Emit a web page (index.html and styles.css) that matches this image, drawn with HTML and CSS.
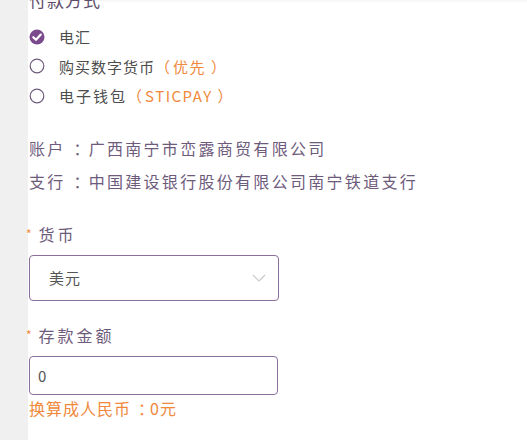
FILE: index.html
```html
<!DOCTYPE html>
<html lang="zh-CN">
<head>
    <meta charset="UTF-8">
    <title>入金</title>
    <link rel="stylesheet" href="styles.css">
</head>
<body>

<div class="page">
    <div class="side"></div>

    <div class="main">
        <h3 class="title">付款方式</h3>

        <!-- payment methods -->
        <ul class="methods">
            <li class="method">
                <svg class="radio" viewBox="0 0 16 16" width="16" height="16">
                    <circle cx="8" cy="8" r="7.5" fill="#7b4a8c"/>
                    <path d="M4.3 8.2 L7 10.8 L11.8 5.6" fill="none" stroke="#fff" stroke-width="2.2" stroke-linecap="round" stroke-linejoin="round"/>
                </svg>
                <span>电汇</span>
            </li>
            <li class="method">
                <svg class="radio" viewBox="0 0 16 16" width="16" height="16">
                    <circle cx="8" cy="8" r="6.8" fill="none" stroke="#6e5b7c" stroke-width="1.2"/>
                </svg>
                <span>购买数字货币<em class="note"><span class="lp">（</span>优先<span class="rp">）</span></em></span>
            </li>
            <li class="method">
                <svg class="radio" viewBox="0 0 16 16" width="16" height="16">
                    <circle cx="8" cy="8" r="6.8" fill="none" stroke="#6e5b7c" stroke-width="1.2"/>
                </svg>
                <span class="wide">电子钱包<em class="note"><span class="lp">（</span>STICPAY<span class="rp">）</span></em></span>
            </li>
        </ul>

        <div class="bank">
            <p>账户<span class="colon">：</span>广西南宁市峦露商贸有限公司</p>
            <p>支行<span class="colon">：</span>中国建设银行股份有限公司南宁铁道支行</p>
        </div>

        <div class="field">
            <label class="label"><i>*</i>货币</label>
            <div class="select">
                <span>美元</span>
                <svg class="chevron" viewBox="0 0 14 8" width="14" height="8">
                    <path d="M1 1 L7 7 L13 1" fill="none" stroke="#c9c9c9" stroke-width="1.2"/>
                </svg>
            </div>
        </div>

        <div class="field second">
            <label class="label"><i>*</i>存款金额</label>
            <input class="amount" type="text" value="0">
            <p class="convert">换算成人民币<span class="colon">：</span>0元</p>
        </div>
    </div>
</div>

</body>
</html>
```

FILE: styles.css
```css
body {
    margin: 0;
    background-color: #f0f0f0;
    font-family: "Noto Sans CJK SC", sans-serif;
    overflow: hidden;
}
.page {
    display: flex;
    min-height: 440px;
}
.side {
    width: 28px;
    flex-shrink: 0;
    background-color: #f0f0f0;
}
.main {
    flex: 1;
    background-color: #fff;
    padding: 0 0 0 1px;
    box-shadow: inset 0 3px 3px -2px rgba(0,0,0,0.06);
}
.title {
    margin: -12px 0 0 0;
    font-size: 17px;
    font-weight: normal;
    letter-spacing: 1px;
    color: #5e4d6a;
    line-height: 24px;
}
.methods {
    list-style: none;
    margin: 10px 0 0 0;
    padding: 0;
}
.method {
    display: flex;
    align-items: center;
    height: 29.5px;
    font-size: 15px;
    color: #4d4d4d;
    letter-spacing: 1px;
}
.method .wide {
    letter-spacing: 2px;
}
.radio {
    margin-right: 14px;
}
.note {
    font-style: normal;
    color: #f0893b;
    letter-spacing: 1.5px;
}
/* brackets: glyph moved towards the middle of its box */
.lp {
    letter-spacing: 3px;
}
.rp {
    margin-left: 5px;
    letter-spacing: -2px;
}
/* colon: centred glyph, box kept at one character */
.colon {
    margin-left: 7px;
    letter-spacing: -4px;
}
.bank {
    margin-top: 21px;
}
.bank p {
    margin: 0;
    font-size: 16px;
    line-height: 33px;
    letter-spacing: 2.3px;
    color: #6e5b7c;
}
.bank .colon {
    margin-left: 8px;
    letter-spacing: -1px;
}
.field {
    margin-top: 24px;
}
.field.second {
    margin-top: 22px;
}
.label {
    display: block;
    font-size: 16px;
    color: #6e5b7c;
    line-height: 24px;
    margin-left: -3px;
    letter-spacing: 3px;
}
.label i {
    font-style: normal;
    color: #f0893b;
    font-size: 12px;
    margin-right: 7px;
    vertical-align: 2px;
    letter-spacing: 0;
}
.select {
    margin-top: 9px;
    border: 1px solid #8c6e9c;
    border-radius: 4px;
    display: flex;
    align-items: center;
    justify-content: space-between;
    padding: 0 12px 0 19px;
    box-sizing: border-box;
    width: 250px;
    height: 46px;
    font-size: 15px;
    color: #555;
    letter-spacing: 1px;
}
.chevron {
    margin-top: 1px;
}
.amount {
    display: block;
    margin-top: 9px;
    width: 249px;
    height: 39px;
    box-sizing: border-box;
    border: 1px solid #8c6e9c;
    border-radius: 4px;
    padding: 0 8px;
    font-family: inherit;
    font-size: 15px;
    color: #555;
    outline: none;
}
.convert {
    margin: 2px 0 0 0;
    font-size: 16px;
    color: #f0893b;
    line-height: 22px;
    letter-spacing: 1px;
}
```
